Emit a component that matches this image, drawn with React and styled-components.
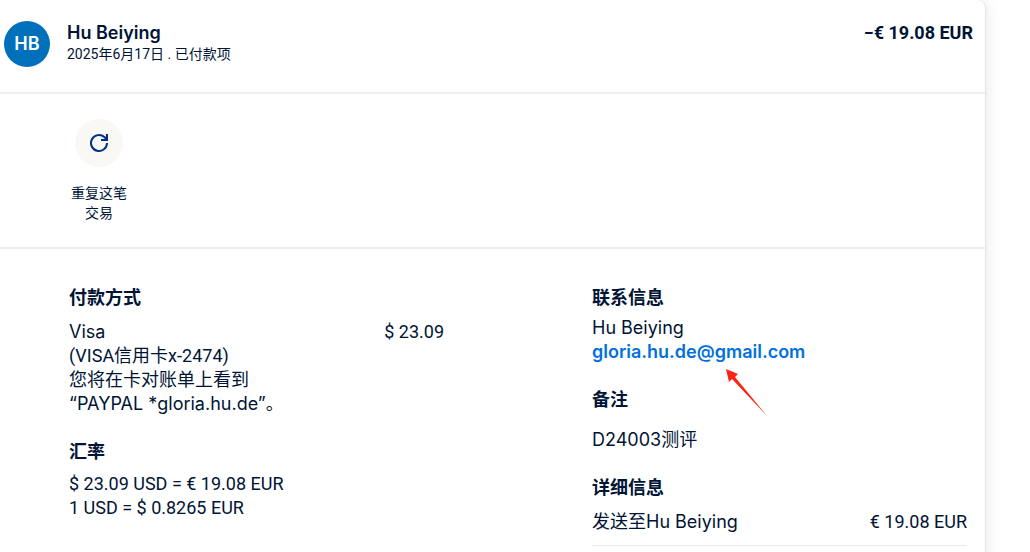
import styled, { createGlobalStyle } from "styled-components";

const GlobalStyle = createGlobalStyle`
  body {
    margin: 0;
    background: #ffffff;
    color: #001435;
    font-family: Inter, "Noto Sans CJK SC", sans-serif;
    font-size: 18px;
    line-height: 24px;
    overflow: hidden;
  }
`;

const Page = styled.main`
  padding-right: 44px;
  height: 100vh;
  box-sizing: border-box;
`;

const Card = styled.article`
  min-height: 100%;
  box-sizing: border-box;
  border-right: 1px solid #e3e3e3;
  border-radius: 0 8px 0 0;
  box-shadow: 0 0 16px rgba(0, 0, 0, 0.1);
`;

const Header = styled.header`
  display: flex;
  align-items: flex-start;
  padding: 21px 12px 25px 4px;
  border-bottom: 2px solid #efefeb;
`;

const Avatar = styled.div`
  display: flex;
  align-items: center;
  justify-content: center;
  width: 46px;
  height: 46px;
  margin-right: 17px;
  border-radius: 50%;
  background: #0070ba;
  color: #ffffff;
  font-size: 18px;
  font-weight: 600;
`;

const Payee = styled.div`
  flex: 1;
`;

const Name = styled.h1`
  margin: 0;
  font-size: 18px;
  font-weight: 600;
  line-height: 24px;
`;

const Meta = styled.p`
  margin: 0;
  font-family: Roboto, "Noto Sans CJK SC", sans-serif;
  font-size: 14px;
  line-height: 18px;
`;

const Total = styled.strong`
  font-family: Roboto, "Noto Sans CJK SC", sans-serif;
  font-weight: 700;
`;

const Actions = styled.section`
  padding: 25px 0 24px 67px;
  border-bottom: 2px solid #efefeb;
`;

const RepeatButton = styled.button`
  display: flex;
  flex-direction: column;
  align-items: center;
  gap: 16px;
  width: 64px;
  padding: 0;
  border: none;
  background: none;
  color: inherit;
  font-family: inherit;
  font-size: 14px;
  line-height: 20px;
  cursor: pointer;

  .circle {
    display: flex;
    align-items: center;
    justify-content: center;
    width: 48px;
    height: 48px;
    border-radius: 50%;
    background: #faf8f5;
  }
`;

const Details = styled.div`
  display: grid;
  grid-template-columns: 1fr 1fr;
  gap: 148px;
  padding: 37px 18px 0 69px;
`;

const Section = styled.section`
  margin-bottom: 24px;
`;

const Title = styled.h2`
  margin: 0 0 ${(props) => props.$gap}px;
  font-size: 18px;
  font-weight: 700;
  line-height: 24px;
`;

const Line = styled.p`
  margin: 0;
`;

const Figures = styled(Line)`
  font-family: Roboto, "Noto Sans CJK SC", sans-serif;
`;

const Row = styled.div`
  display: flex;
  justify-content: space-between;
  padding-bottom: ${(props) => (props.$divided ? "11px" : "0")};
  border-bottom: ${(props) => (props.$divided ? "1px solid #e9e9e9" : "none")};
`;

const Email = styled.a`
  position: relative;
  color: #0070e0;
  font-weight: 600;
  text-decoration: none;
`;

const Arrow = styled.svg`
  position: absolute;
  top: 27px;
  left: 133px;
`;

function RepeatIcon() {
  return (
    <svg width="24" height="24" viewBox="0 0 24 24" fill="none" aria-hidden="true">
      <path
        d="M20 12a8 8 0 1 1-2.6-5.9L20 8.5"
        stroke="#003087"
        strokeWidth="2"
      />
      <path d="M20 3v6h-6" stroke="#003087" strokeWidth="2" />
      <path d="M20 5.5V9h-3.5z" fill="#003087" />
    </svg>
  );
}

export default function App() {
  return (
    <>
      <GlobalStyle />
      <Page>
        <Card>
          <Header>
            <Avatar>HB</Avatar>
            <Payee>
              <Name>Hu Beiying</Name>
              <Meta>2025年6月17日 . 已付款项</Meta>
            </Payee>
            <Total>−€ 19.08 EUR</Total>
          </Header>

          <Actions>
            <RepeatButton type="button">
              <span className="circle">
                <RepeatIcon />
              </span>
              <span>重复这笔交易</span>
            </RepeatButton>
          </Actions>

          <Details>
            <div>
              <Section>
                <Title $gap={10}>付款方式</Title>
                <Row>
                  <Line>Visa</Line>
                  <Figures>$ 23.09</Figures>
                </Row>
                <Figures>(VISA信用卡x-2474)</Figures>
                <Line>您将在卡对账单上看到</Line>
                <Line>“PAYPAL *gloria.hu.de”。</Line>
              </Section>
              <Section>
                <Title $gap={8}>汇率</Title>
                <Figures>$ 23.09 USD = € 19.08 EUR</Figures>
                <Figures>1 USD = $ 0.8265 EUR</Figures>
              </Section>
            </div>

            <div>
              <Section>
                <Title $gap={6}>联系信息</Title>
                <Line>Hu Beiying</Line>
                <Line>
                  <Email href="mailto:gloria.hu.de@gmail.com">
                    gloria.hu.de@gmail.com
                    <Arrow width="44" height="50" viewBox="0 0 44 50" aria-hidden="true">
                      <path d="M1 1L13 6L10 9L42 48L7 11L4 14Z" fill="#fb2516" />
                    </Arrow>
                  </Email>
                </Line>
              </Section>
              <Section>
                <Title $gap={16}>备注</Title>
                <Line>D24003测评</Line>
              </Section>
              <Section>
                <Title $gap={10}>详细信息</Title>
                <Row $divided>
                  <Line>发送至Hu Beiying</Line>
                  <Figures>€ 19.08 EUR</Figures>
                </Row>
              </Section>
            </div>
          </Details>
        </Card>
      </Page>
    </>
  );
}
